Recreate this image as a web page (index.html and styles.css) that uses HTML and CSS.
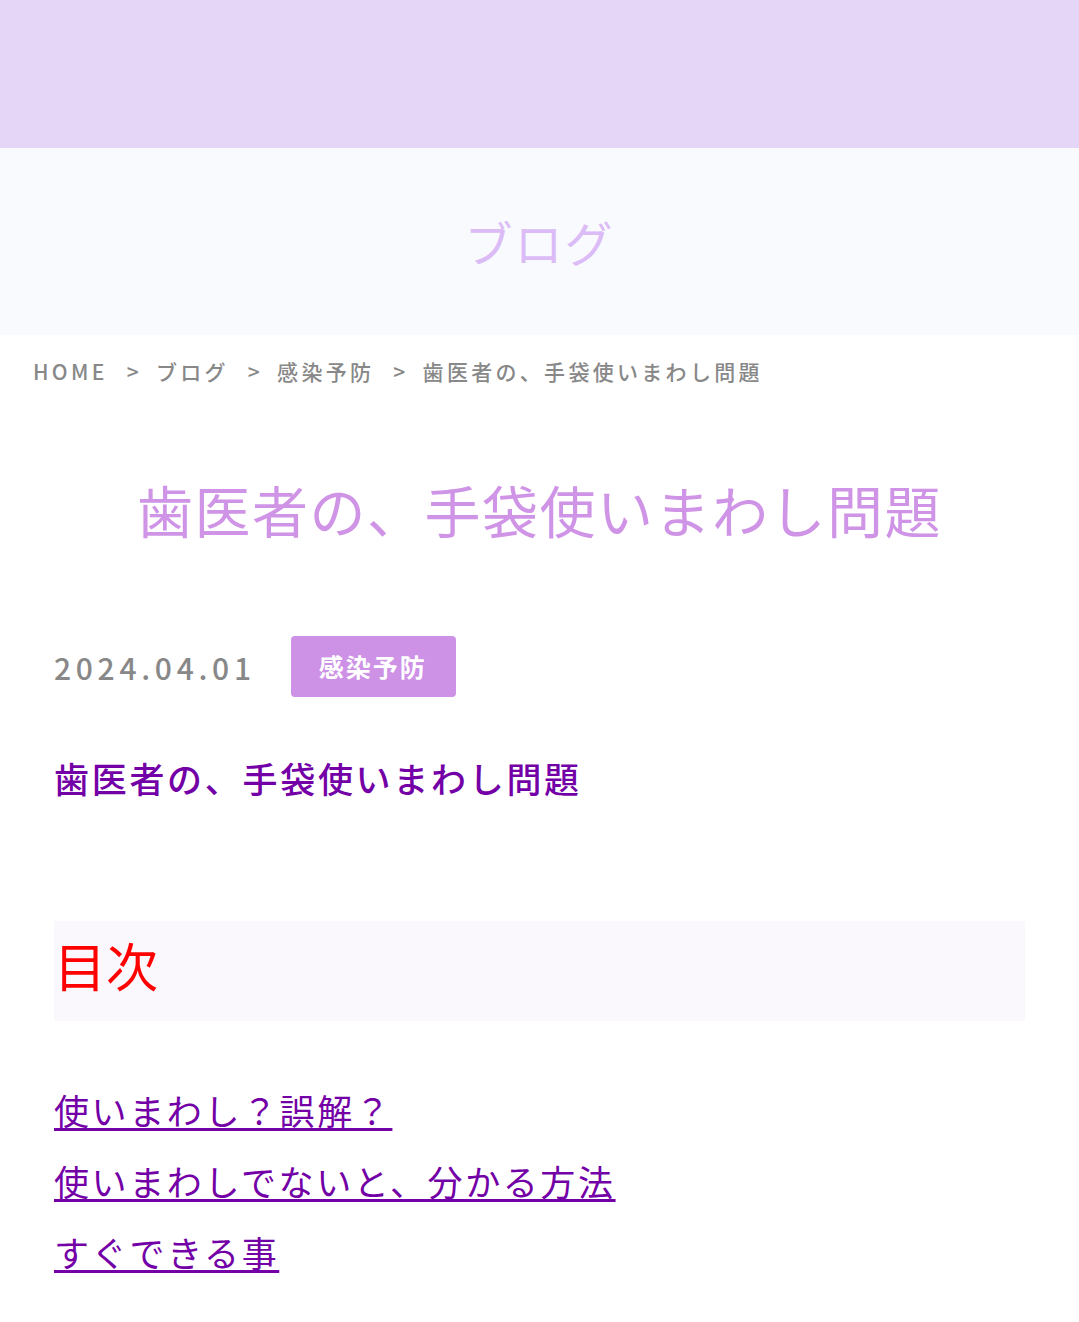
FILE: index.html
```html
<!DOCTYPE html>
<html lang="ja">
<head>
<meta charset="utf-8">
<title>歯医者の、手袋使いまわし問題</title>
<link rel="stylesheet" href="styles.css">
</head>
<body>
<header class="topbar"></header>
<section class="hero">
  <h1 class="hero-title">ブログ</h1>
</section>
<nav class="breadcrumb">
  <span>HOME</span><span class="sep">&gt;</span><span>ブログ</span><span class="sep">&gt;</span><span>感染予防</span><span class="sep">&gt;</span><span>歯医者の、手袋使いまわし問題</span>
</nav>
<main class="article">
  <h2 class="article-title">歯医者の、手袋使いまわし問題</h2>
  <div class="meta">
    <span class="date">2024.04.01</span>
    <span class="tag">感染予防</span>
  </div>
  <p class="lead">歯医者の、手袋使いまわし問題</p>
  <div class="toc-box"><span class="toc-title">目次</span></div>
  <ul class="toc-list">
    <li><a href="#a1">使いまわし？誤解？</a></li>
    <li><a href="#a2">使いまわしでないと、分かる方法</a></li>
    <li><a href="#a3">すぐできる事</a></li>
  </ul>
</main>
</body>
</html>
```
FILE: styles.css
```css
* { box-sizing: border-box; }
html, body { margin: 0; padding: 0; }
body {
  font-family: "Noto Sans CJK JP", "Noto Sans", sans-serif;
  background: #ffffff;
  color: #333;
}
.topbar {
  height: 148px;
  background: #e5d5f7;
}
.hero {
  height: 187px;
  background: #f9fafe;
  display: flex;
  align-items: center;
  justify-content: center;
}
.hero-title {
  margin: 0;
  font-size: 48px;
  font-weight: 400;
  color: #dcbcf6;
  letter-spacing: 2px;
  line-height: 1;
  padding-bottom: 2px;
}
.breadcrumb {
  padding: 20px 33px 0;
  font-size: 21px;
  font-weight: 500;
  color: #888888;
  letter-spacing: 3.3px;
  line-height: 32px;
  display: flex;
}
.breadcrumb .sep {
  margin: 0 14px 0 19px;
}
.article {
  padding: 0 54px;
}
.article-title {
  margin: 84px 0 0;
  text-align: center;
  font-size: 56px;
  font-weight: 400;
  color: #cf94e6;
  letter-spacing: 1.5px;
  line-height: 76px;
}
.meta {
  margin-top: 89px;
  display: flex;
  align-items: center;
  gap: 35px;
}
.date {
  font-size: 30px;
  font-weight: 500;
  color: #888888;
  letter-spacing: 4.7px;
  line-height: 40px;
}
.tag {
  background: #cd91e6;
  color: #ffffff;
  font-weight: 700;
  font-size: 25px;
  letter-spacing: 2px;
  height: 61px;
  line-height: 61px;
  padding: 0 29px 0 28px;
  border-radius: 4px;
}
.lead {
  margin: 56px 0 0;
  font-size: 35px;
  font-weight: 500;
  color: #7300a6;
  letter-spacing: 2.7px;
  line-height: 50px;
}
.toc-box {
  margin-top: 118px;
  height: 100px;
  background: #faf8fd;
  display: flex;
  align-items: center;
  padding-left: 0;
}
.toc-title {
  font-size: 52px;
  color: #ff0000;
  line-height: 1;
  padding-bottom: 12px;
}
.toc-list {
  list-style: none;
  margin: 53px 0 0;
  padding: 0;
}
.toc-list li {
  line-height: 71px;
  font-size: 35px;
  letter-spacing: 2.6px;
}
.toc-list a {
  color: #7300a6;
  text-decoration: underline;
  text-decoration-thickness: 3px;
  text-underline-offset: 3px;
}
```
